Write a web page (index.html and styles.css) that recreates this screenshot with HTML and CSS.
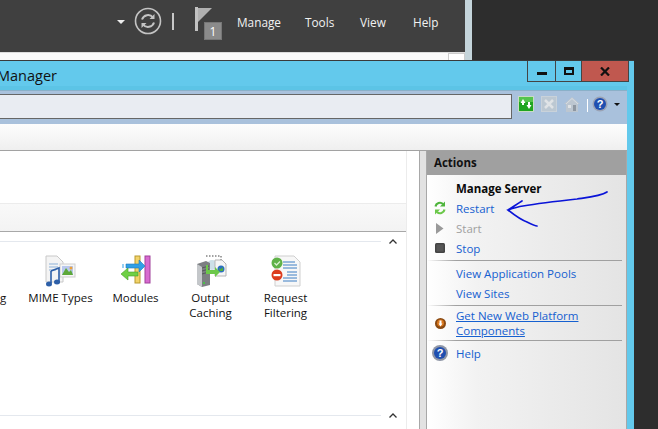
FILE: index.html
```html
<!DOCTYPE html>
<html lang="en">
<head>
<meta charset="utf-8">
<title>Manager</title>
<link rel="stylesheet" href="styles.css">
</head>
<body>
<div class="sm">
  <header class="sm-bar">
    <svg class="caret-w" width="8" height="4" viewBox="0 0 8 4"><path d="M0 0h8L4 4z" fill="#eee"/></svg>
    <svg class="sync" width="28" height="28" viewBox="0 0 28 28" fill="none">
      <circle cx="14" cy="14" r="12.5" stroke="#c4c4c4" stroke-width="1.6"/>
      <path d="M8 12.500a6.300 6.300 0 0 1 11-2" stroke="#c4c4c4" stroke-width="2"/>
      <path d="M20.500 7v5h-5z" fill="#c4c4c4"/>
      <path d="M20 15.500a6.300 6.300 0 0 1-11 2" stroke="#c4c4c4" stroke-width="2"/>
      <path d="M7.500 21v-5h5z" fill="#c4c4c4"/>
    </svg>
    <span class="pipe"></span>
    <div class="flag">
      <svg width="18" height="25" viewBox="0 0 18 25"><path d="M0 0h3v24H0z" fill="#c2c2c2"/><path d="M3 1h14L3 15z" fill="#b0b0b0"/></svg>
      <span class="badge">1</span>
    </div>
    <nav class="sm-menu">
      <span class="m-manage">Manage</span>
      <span class="m-tools">Tools</span>
      <span class="m-view">View</span>
      <span>Help</span>
    </nav>
  </header>
  <div class="sm-body"><span class="sm-scroll"></span></div>
</div>

<div class="iis">
  <div class="title">
    <span class="title-text">Manager</span>
    <div class="controls">
      <span class="ctl ctl-min"><i></i></span>
      <span class="ctl ctl-max"><i></i></span>
      <span class="ctl ctl-close"><svg width="10" height="9" viewBox="0 0 10 9"><path d="M1 .5l8 8M9 .5l-8 8" stroke="#111" stroke-width="2.200" fill="none"/></svg></span>
    </div>
  </div>
  <div class="toolbar">
    <div class="address"></div>
    <div class="tools">
      <svg width="16" height="16" viewBox="0 0 16 16"><rect width="16" height="16" fill="#c9dcc4"/><rect x="1" y="1" width="14" height="14" fill="#1fa51f"/><rect x="1" y="1" width="14" height="5" fill="#54c44c"/><path d="M2.500 7l2.500-4 2.500 4H6v2H4V7zM13.500 9l-2.500 4-2.500-4H10V6h2v3z" fill="#fff"/></svg>
      <svg width="16" height="16" viewBox="0 0 16 16"><rect x=".5" y=".5" width="15" height="15" fill="#bcc8d2" stroke="#c9d2da"/><path d="M4 4l8 8M12 4l-8 8" stroke="#dfe3e6" stroke-width="2.500"/></svg>
      <svg width="16" height="16" viewBox="0 0 16 16"><path d="M0 8l8-7 8 7-2 0v8H2V8z" fill="#bcc6d0"/><path d="M8 2.500L2 8M8 2.500L14 8" stroke="#d8dde2"/><rect x="9" y="9" width="3" height="6" fill="#8e97a1"/><rect x="4" y="9" width="3" height="3" fill="#dfe3e6"/></svg>
      <span class="tool-sep"></span>
      <svg width="16" height="16" viewBox="0 0 16 16"><circle cx="8" cy="8" r="7.500" fill="#9aa2b4"/><circle cx="8" cy="8" r="6" fill="#1f4fb0"/><text class="help-q" x="8" y="12" text-anchor="middle" font-size="11">?</text></svg>
      <svg class="tool-caret" width="6" height="3" viewBox="0 0 6 3"><path d="M0 0h6L3 3z" fill="#111"/></svg>
    </div>
  </div>
  <div class="menubar"></div>

  <div class="main">
    <section class="center">
      <div class="center-inner">
        <div class="intro"></div>
        <div class="group-bar"></div>
        <div class="group">
          <div class="group-line"><span></span><svg width="8" height="5" viewBox="0 0 8 5"><path d="M.5 4.500L4 1l3.500 3.500" fill="none" stroke="#333" stroke-width="1.300"/></svg></div>
          <div class="features">
            <div class="feature"><div class="ficon"></div><div class="flabel">Logging</div></div>
            <div class="feature">
              <div class="ficon">
                <svg width="32" height="32" viewBox="0 0 32 32">
                  <path d="M1 1h11l6 6v20H1z" fill="#f4f4f4" stroke="#c8c8c8"/>
                  <path d="M4 9h9M4 12h9M4 15h7" stroke="#8db1d8"/>
                  <rect x="15" y="9" width="15" height="13" fill="#f6f6f6" stroke="#cfcfcf"/>
                  <rect x="17" y="11" width="11" height="9" fill="#b8c8ee"/>
                  <path d="M17 20l4-7 3 4 2-2 2 5z" fill="#5da83a"/>
                  <circle cx="26" cy="13" r="1.500" fill="#e9a13c"/>
                  <path d="M6 16l8-3v15" fill="none" stroke="#2d5fa8" stroke-width="1.600"/>
                  <path d="M6 16v12" stroke="#2d5fa8" stroke-width="1.600"/>
                  <ellipse cx="4" cy="29" rx="3" ry="2.500" fill="#2d5fa8"/>
                  <ellipse cx="12" cy="27" rx="3" ry="2.500" fill="#2d5fa8"/>
                </svg>
              </div>
              <div class="flabel">MIME Types</div>
            </div>
            <div class="feature">
              <div class="ficon">
                <svg width="32" height="32" viewBox="0 0 32 32">
                  <rect x="15" y="1" width="5" height="27" fill="#f2d36a" stroke="#b89a2e"/>
                  <rect x="25" y="1" width="5" height="27" fill="#d86ad0" stroke="#a0409a"/>
                  <path d="M6 9h13V5l6 6-6 6v-4H6z" fill="#2f9fe6" stroke="#1f78b8" stroke-width=".6"/>
                  <path d="M18 17H8v-4l-7 6 7 6v-4h10z" fill="#6fd045" stroke="#48a02c" stroke-width=".6"/>
                  <path d="M3 9v4" stroke="#2f9fe6"/>
                </svg>
              </div>
              <div class="flabel">Modules</div>
            </div>
            <div class="feature">
              <div class="ficon">
                <svg width="32" height="32" viewBox="0 0 32 32">
                  <path d="M11 1h15v9" fill="none" stroke="#444" stroke-dasharray="1.500 1.500"/>
                  <circle cx="17" cy="10" r="5" fill="#cde0e8"/>
                  <path d="M20 5h7l4 4v12H20z" fill="#f6f6f6" stroke="#b5b5b5"/>
                  <circle cx="26" cy="14" r="3.500" fill="#2c6fc0"/>
                  <path d="M24 13l2 1 2-2 0 4-3 0z" fill="#4fae3c"/>
                  <path d="M2 9l9-3 4 2v22l-8 2-5-3z" fill="#7c7f82"/>
                  <path d="M2 9l5 3v20l-5-3z" fill="#c4c7ca"/>
                  <path d="M7 13l7-2M7 16l7-2M7 19l7-2" stroke="#55585a"/>
                  <rect x="8" y="27" width="2" height="2" fill="#49c14a"/>
                  <path d="M13 10v5h7v-3l5 5-5 5v-3h-9v-9z" fill="#6cc84a"/>
                </svg>
              </div>
              <div class="flabel">Output Caching</div>
            </div>
            <div class="feature">
              <div class="ficon">
                <svg width="32" height="32" viewBox="0 0 32 32">
                  <path d="M5 1h19l6 6v24H5z" fill="#f7f7f7" stroke="#cfcfcf"/>
                  <path d="M13 7h12M13 10h14M13 13h14M17 17h10M17 20h10M13 23h14M13 26h14" stroke="#3d7fc4"/>
                  <circle cx="7" cy="8" r="5.500" fill="#5fb248"/>
                  <path d="M4.500 8l2 2 3.500-3.500" stroke="#d8f0d0" fill="none" stroke-width="1.300"/>
                  <circle cx="7" cy="20" r="5.500" fill="#dc3c1e"/>
                  <rect x="3.500" y="19" width="7" height="2.200" fill="#fff"/>
                </svg>
              </div>
              <div class="flabel">Request Filtering</div>
            </div>
          </div>
        </div>
        <div class="group-line group-line-low"><span></span><svg width="8" height="5" viewBox="0 0 8 5"><path d="M.5 4.500L4 1l3.500 3.500" fill="none" stroke="#333" stroke-width="1.300"/></svg></div>
      </div>
    </section>

    <div class="splitter"></div>

    <aside class="actions">
      <h2 class="actions-head">Actions</h2>
      <div class="actions-body">
        <div class="row"><span class="ai"></span><b>Manage Server</b></div>
        <div class="row">
          <span class="ai"><svg width="12" height="14" viewBox="0 0 12 14" fill="none"><path d="M1.500 5.500A4.500 4.500 0 0 1 9 3" stroke="#4fb53c" stroke-width="2.200"/><path d="M11 .5v5H6z" fill="#4fb53c"/><path d="M10.500 8.500A4.500 4.500 0 0 1 3 11" stroke="#6cc84a" stroke-width="2.200"/><path d="M1 13.500v-5h5z" fill="#6cc84a"/></svg></span>
          <a class="link">Restart</a>
        </div>
        <div class="row">
          <span class="ai"><svg width="8" height="11" viewBox="0 0 8 11"><path d="M0 0l7.500 5.500L0 11z" fill="#9a9a9a"/></svg></span>
          <a class="link-off">Start</a>
        </div>
        <div class="row">
          <span class="ai"><svg width="10" height="10" viewBox="0 0 10 10"><rect width="10" height="10" rx="1.500" fill="#444"/><rect x="1.500" y="1.500" width="7" height="7" fill="#555"/></svg></span>
          <a class="link">Stop</a>
        </div>
        <hr class="sep sep-a">
        <div class="row"><span class="ai"></span><a class="link">View Application Pools</a></div>
        <div class="row"><span class="ai"></span><a class="link">View Sites</a></div>
        <hr class="sep sep-b">
        <div class="row row-two">
          <span class="ai"><svg width="11" height="11" viewBox="0 0 11 11"><circle cx="5.500" cy="5.500" r="5.500" fill="#8a4a12"/><circle cx="5.500" cy="5" r="3.500" fill="#d9781e"/><path d="M4.500 2.500h2v3h1l-2 3-2-3h1z" fill="#fff"/></svg></span>
          <a class="link under">Get New Web Platform <br>Components</a>
        </div>
        <hr class="sep sep-c">
        <div class="row row-help">
          <span class="ai"><svg width="16" height="16" viewBox="0 0 16 16"><circle cx="8" cy="8" r="8" fill="#8f96a6"/><circle cx="8" cy="8" r="6" fill="#1f4fb0"/><text class="help-q" x="8" y="12" text-anchor="middle" font-size="11">?</text></svg></span>
          <a class="link">Help</a>
        </div>
      </div>
    </aside>
  </div>
</div>

<svg class="scribble" width="110" height="40" viewBox="0 0 110 40" fill="none">
  <path d="M102 2C96 6 86 7 72 9 54 11 36 13 18 16 12 17 6 19 3 20 8 24 16 30 22 32 26 34 30 36 32 36M3 20C8 17 12 14 17 11" stroke="#0a14d8" stroke-width="1.700" stroke-linecap="round"/>
</svg>
</body>
</html>
```
FILE: styles.css
```css
* { box-sizing: border-box; }
html, body { margin: 0; padding: 0; height: 100%; }
body {
  position: relative;
  width: 658px;
  height: 429px;
  overflow: hidden;
  background: #2d2d2d;
  font-family: "Open Sans", "Noto Sans", sans-serif;
  font-size: 11.5px;
  color: #111;
}

/* Back window */
.sm {
  position: absolute;
  left: 0;
  top: 0;
  width: 472px;
  height: 62px;
  background: #c4d4da;
  padding-right: 7px;
}
.sm-bar {
  height: 52px;
  background: #404040;
  display: flex;
  align-items: flex-start;
  padding-left: 117px;
  color: #f2f2f2;
}
.caret-w { margin-top: 20px; }
.sync { margin: 7px 0 0 9px; }
.pipe { width: 2px; height: 17px; margin: 13px 0 0 10px; background: #c8c8c8; }
.flag { position: relative; width: 28px; height: 40px; margin: 7px 0 0 21px; }
.badge {
  position: absolute;
  left: 9px;
  top: 15px;
  width: 18px;
  height: 18px;
  background: #8b8b8b;
  color: #fff;
  font-size: 12px;
  line-height: 18px;
  text-align: center;
  border: 1px solid #777;
}
.sm-menu { display: flex; margin: 13px 0 0 14px; font-size: 11.8px; line-height: 18px; }
.m-manage { width: 68px; }
.m-tools { width: 55px; }
.m-view { width: 53px; }
.sm-body { height: 10px; background: #fafafa; position: relative; border-top: 1px solid #ddd; }
.sm-scroll { position: absolute; right: 0; top: 0; width: 17px; height: 9px; background: #fff; border: 1px solid #ccc; }

/* IIS window */
.iis {
  position: absolute;
  left: 0;
  top: 60px;
  width: 634px;
  height: 369px;
  background: #63c9ec;
  border-top: 1px solid #3a3a3a;
  padding-right: 7px;
  display: flex;
  flex-direction: column;
}
.title {
  height: 30px;
  flex: none;
  display: flex;
  justify-content: space-between;
  align-items: flex-start;
  border-bottom: 1px solid #8ab0c8;
  background: linear-gradient(#63c9ec 25px, #5cc4e6 25px);
}
.title-text { margin: 4px 0 0 -3px; font-size: 14.5px; line-height: 22px; color: #111; }
.controls { display: flex; height: 21px; margin-right: -2px; border: 1px solid #444; border-top: 0; }
.ctl { display: flex; align-items: center; justify-content: center; height: 20px; }
.ctl-min { width: 28px; border-right: 1px solid #444; }
.ctl-min i { display: block; width: 10px; height: 3px; margin-top: 4px; background: #111; }
.ctl-max { width: 26px; border-right: 1px solid #444; }
.ctl-max i { display: block; width: 10px; height: 8px; border: 2px solid #111; border-top-width: 3px; }
.ctl-close { width: 46px; background: #c0584f; }

.toolbar {
  height: 33px;
  flex: none;
  background: #a9c1dc;
  display: flex;
  align-items: flex-start;
  padding-top: 3px;
}
.address { width: 512px; height: 25px; background: #e9ecf2; border: 1px solid #666; border-left: 0; }
.tools { display: flex; align-items: flex-start; margin: 2px 0 0 6px; }
.tools > svg { margin-right: 7px; }
.tools > svg + svg { margin-right: 7px; }
.tool-sep { width: 1px; height: 13px; margin: 3px 4px 0 0; background: #fff; }
.tools > .tool-caret { margin: 7px 0 0 -1px; }
.help-q { fill: #fff; font-weight: 700; font-family: "Liberation Sans", sans-serif; }

.menubar {
  height: 27px;
  flex: none;
  background: linear-gradient(#fdfdfd, #efefef);
  border-bottom: 1px solid #a2a2a2;
}

.main { flex: 1; display: flex; min-height: 0; background: #fff; }
.center { width: 420px; flex: none; border-right: 1px solid #a8a8a8; background: #fff; }
.center-inner { width: 407px; height: 100%; border-right: 1px solid #ececec; }
.intro { height: 52px; }
.group-bar {
  height: 29px;
  background: linear-gradient(#f9f9f9, #f3f3f3);
  border-top: 1px solid #ececec;
  border-bottom: 1px solid #a8a8a8;
}
.group { height: 181px; padding-top: 7px; }
.group-line { display: flex; align-items: center; height: 5px; }
.group-line span { width: 381px; height: 1px; background: #e4e8ee; }
.group-line svg { margin-left: 8px; }
.features { display: flex; margin: 11px 0 0 -52px; }
.feature { width: 75px; flex: none; text-align: center; }
.ficon { height: 35px; display: flex; justify-content: center; align-items: flex-start; }
.flabel { line-height: 15px; padding: 0 3px; }

.splitter { width: 7px; flex: none; background: #e2e2e2; border-right: 1px solid #a8a8a8; }
.actions { flex: 1; display: flex; flex-direction: column; border-right: 1px solid #a8a8a8; }
.actions-head {
  margin: 0;
  height: 24px;
  flex: none;
  padding-left: 7px;
  background: #a0a0a0;
  font-size: 11.5px;
  font-weight: 700;
  line-height: 23px;
}
.actions-body {
  flex: 1;
  padding-top: 3px;
  background: linear-gradient(90deg, #fff 0, #f2f2f2 25%, #e4e4e4 100%);
}
.row { display: flex; align-items: center; height: 20px; }
.ai { width: 29px; flex: none; display: flex; justify-content: center; padding-right: 3px; }
.row b { font-weight: 700; color: #0a0a0a; }
.link { color: #1560d0; }
.link-off { color: #a0a0a0; }
.under { text-decoration: underline; line-height: 15px; }
.row-two { height: 30px; }
.sep { height: 1px; margin: 0 4px 0 0; border: 0; background: linear-gradient(90deg, rgba(160,160,160,0) 0, #a0a0a0 15%); }
.sep-a { margin-top: 2px; margin-bottom: 2px; }
.sep-b { margin-top: 2px; margin-bottom: 2px; }
.sep-c { margin-top: 2px; }
.row-help { margin-top: 2px; }

.scribble { position: absolute; left: 505px; top: 190px; }
```
